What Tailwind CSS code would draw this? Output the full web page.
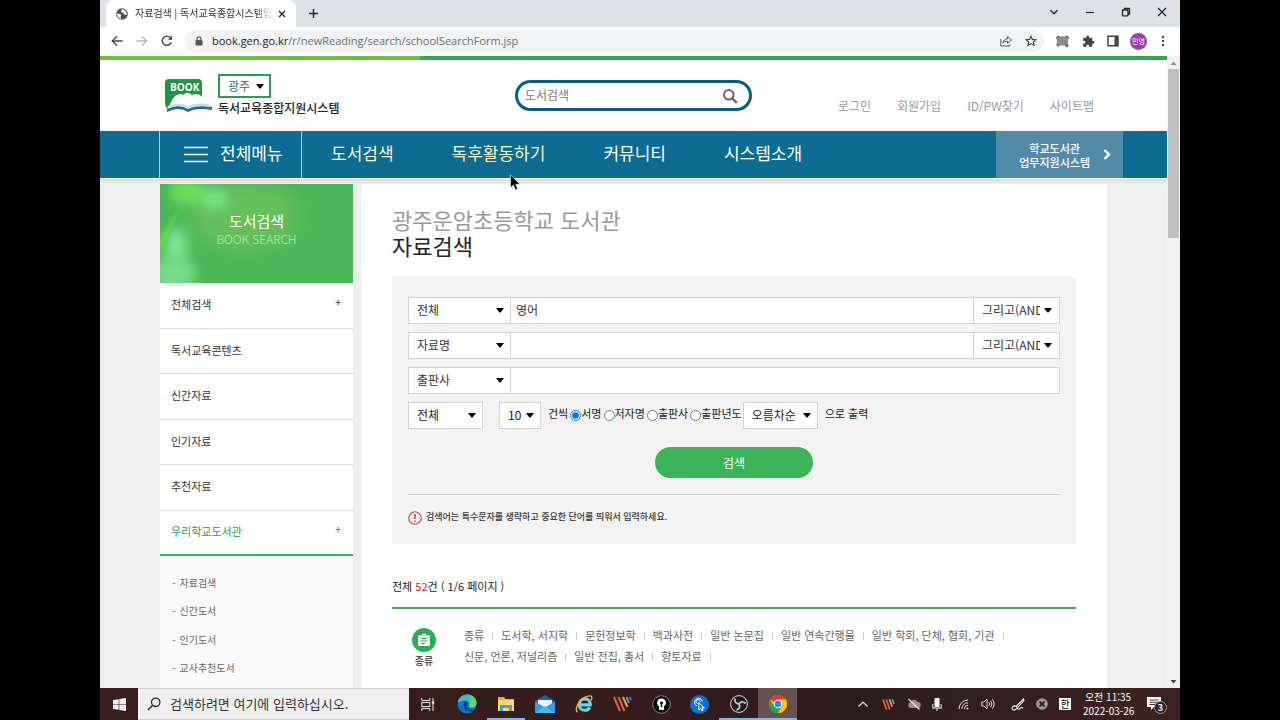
<!DOCTYPE html>
<html lang="ko">
<head>
<meta charset="utf-8">
<meta name="viewport" content="width=device-width, initial-scale=1">
<title>자료검색 | 독서교육종합지원시스템</title>
<script src="https://cdn.jsdelivr.net/npm/@tailwindcss/browser@4"></script>
</head>
<body class="bg-black font-['Noto_Sans_CJK_KR','Noto_Sans',sans-serif] text-[11px] text-[#333]">
<div class="relative mx-[100px] flex h-screen flex-col overflow-hidden bg-white">

  <!-- Tab strip -->
  <div class="flex h-[27px] shrink-0 items-stretch bg-[#dee1e6] pl-[6px]">
    <div class="flex w-[190px] items-center rounded-t-lg bg-white pr-2 pl-[10px]">
      <svg class="mr-[7px] size-3 shrink-0" viewBox="0 0 12 12"><circle cx="6" cy="6" r="5.8" fill="#4d5156"/><path d="M1.2 5.2C2.6 6 4.4 5.6 5 6.8c.5 1-.6 1.400-.4 2.400.1.700.9 1 .8 1.600C3 10.600 1 8.500 1.200 5.200zM5.500 1.200c-.6.8.4 1.500-.3 2.200-.6.6.1 1.200 1 1 .9-.2 1.400.4 1.300 1.200-.1.9.8 1.300 1.600 1.100.7-.2 1 .2 1.500.3.500-2.800-1.500-5.700-5.100-5.800z" fill="#fff"/></svg>
      <span class="flex-1 overflow-hidden whitespace-nowrap pb-px text-[10px] leading-4 [mask-image:linear-gradient(to_right,black_88%,transparent)]">자료검색 | 독서교육종합시스템입</span>
      <button aria-label="탭 닫기" class="flex size-4 shrink-0 items-center justify-center"><svg class="ml-1 size-2" viewBox="0 0 8 8"><path d="M1 1l6 6M7 1L1 7" stroke="#222" stroke-width="1.3"/></svg></button>
    </div>
    <button aria-label="새 탭" class="flex w-[34px] items-center justify-center"><svg class="size-[11px]" viewBox="0 0 11 11"><path d="M5.500 1v9M1 5.500h9" stroke="#222" stroke-width="1.400"/></svg></button>
    <div class="ml-auto flex items-center gap-[26px] pr-[13px] pb-1">
      <button aria-label="탭 검색"><svg class="size-[10px]" viewBox="0 0 10 10"><path d="M1.500 3.300L5 6.800l3.500-3.500" fill="none" stroke="#222" stroke-width="1.300"/></svg></button>
      <button aria-label="최소화"><svg class="size-[10px]" viewBox="0 0 10 10"><path d="M1 5.500h8" stroke="#222" stroke-width="1.200"/></svg></button>
      <button aria-label="이전 크기로"><svg class="size-[10px]" viewBox="0 0 10 10" fill="none" stroke="#222" stroke-width="1.300"><rect x="1.500" y="3" width="5.500" height="5.800" rx=".5"/><path d="M3.500 3V1.300h5V7H7"/></svg></button>
      <button aria-label="닫기"><svg class="size-[10px]" viewBox="0 0 10 10"><path d="M1 1l8 8M9 1L1 9" stroke="#222" stroke-width="1.200"/></svg></button>
    </div>
  </div>

  <!-- Address bar -->
  <div class="flex h-[29px] shrink-0 items-center bg-white pr-[15px] pb-px pl-[11px]">
    <div class="flex w-[74px] items-center gap-[13px]">
      <button aria-label="뒤로"><svg class="size-3" viewBox="0 0 12 12"><path d="M11.500 6H1.200M6 1.200L1.200 6 6 10.800" fill="none" stroke="#444" stroke-width="1.300"/></svg></button>
      <button aria-label="앞으로"><svg class="size-3" viewBox="0 0 12 12"><path d="M.5 6h10.300M6 1.200L10.800 6 6 10.800" fill="none" stroke="#b5b8bb" stroke-width="1.300"/></svg></button>
      <button aria-label="새로고침"><svg class="size-3" viewBox="0 0 12 12"><path d="M10.300 7.200A4.600 4.600 0 1 1 9.400 2.700" fill="none" stroke="#444" stroke-width="1.400"/><path d="M11 .6v4.200H6.800z" fill="#444"/></svg></button>
    </div>
    <div class="flex h-[22px] flex-1 items-center rounded-full bg-[#f1f3f4] pr-[7px] pl-[9px]">
      <svg class="mr-2 size-[10px] shrink-0" viewBox="0 0 10 10"><rect x="1.500" y="4" width="7" height="5.500" rx=".8" fill="#555"/><path d="M3 4.200V2.800a2 2 0 0 1 4 0v1.400" fill="none" stroke="#555" stroke-width="1.200"/></svg>
      <span class="flex-1 whitespace-nowrap font-['Open_Sans',sans-serif] text-[11px] leading-4 text-[#6b6f73]"><span class="text-[#222]">book.gen.go.kr</span>/r/newReading/search/schoolSearchForm.jsp</span>
      <button aria-label="공유" class="mr-[13px]"><svg class="size-3" viewBox="0 0 12 12" fill="none" stroke="#555" stroke-width="1"><path d="M.8 4v7h9V9.500"/><path d="M3 8c.3-2.600 1.800-4 4.500-4.200V1.600L11.500 5 7.500 8.300V6.200C5.500 6.200 4.200 6.700 3 8z"/></svg></button>
      <button aria-label="북마크"><svg class="size-3" viewBox="0 0 12 12"><path d="M6 1.200l1.400 3.200 3.500.3-2.600 2.300.8 3.400L6 8.600l-3.100 1.800.8-3.400L1.100 4.700l3.500-.3z" fill="none" stroke="#444" stroke-width="1.100"/></svg></button>
    </div>
    <div class="flex items-center pl-3">
      <button aria-label="화면 캡처"><svg class="size-[13px]" viewBox="0 0 13 13"><rect x="1" y="1.500" width="11" height="9" rx="2" fill="#8a8a8a"/><path d="M.8 4V2.500Q.8 1.300 2 1.300h1.500M9.500 1.300h1.700q1 0 1 1V4M.8 8.500v1q0 1.300 1.200 1.300h1.500M10.800 9v3.500M9 10.800h3.500" fill="none" stroke="#444"/></svg></button>
      <button aria-label="확장 프로그램" class="ml-[13px]"><svg class="size-[13px]" viewBox="0 0 24 24"><path d="M20.500 11H19V7a2 2 0 0 0-2-2h-4V3.500a2.500 2.500 0 0 0-5 0V5H4a2 2 0 0 0-2 2v3.800h1.500a2.700 2.700 0 0 1 0 5.400H2V20a2 2 0 0 0 2 2h3.800v-1.500a2.700 2.700 0 0 1 5.400 0V22H17a2 2 0 0 0 2-2v-4h1.500a2.500 2.500 0 0 0 0-5z" fill="#444"/></svg></button>
      <button aria-label="측면 패널" class="ml-3"><svg class="size-[12px]" viewBox="0 0 12 12"><rect x="1" y="1.200" width="10" height="9.600" fill="none" stroke="#444" stroke-width="1.500"/><path d="M7.500 1h3.500v10H7.500z" fill="#444"/></svg></button>
      <button class="ml-[11px] flex size-[17px] items-center justify-center rounded-full bg-[#a03bb0] text-[7px] text-white">민영</button>
      <button aria-label="메뉴" class="ml-[14px]"><svg class="h-3 w-1" viewBox="0 0 4 12" fill="#444"><circle cx="2" cy="2" r="1.200"/><circle cx="2" cy="6" r="1.200"/><circle cx="2" cy="10" r="1.200"/></svg></button>
    </div>
  </div>

  <!-- Web page and its scroll bar -->
  <div class="flex min-h-0 flex-1">
    <div class="flex min-w-0 flex-1 flex-col overflow-hidden bg-[#eee]">
      <div class="flex h-1 shrink-0 bg-[#2fa854]"><div class="w-[30%] bg-[#70c038]"></div></div>

      <header class="grid h-[71px] shrink-0 grid-cols-[1fr_237px_1fr] items-center bg-white px-[60px]">
        <div class="flex items-center gap-[6px] pl-[5px]">
          <svg class="h-[38px] w-[47px]" viewBox="0 0 47 38">
            <path d="M4 2h29q4 0 4 4v18H22L2 32q-2-3-2-6V6Q0 2 4 2z" fill="#1d9647"/>
            <path d="M4 31q3-13 11-14 2 0 3 1 3-3 6-2l3 2q4-2 8 0l2 2v8l8 4q-12-3-20 2-8-5-21 0z" fill="#fff"/>
            <path d="M2 32q12-6 21 0 8-5 24-2v3q-16-3-24 2-9-6-21 0z" fill="#1b6b92"/>
            <path d="M3 29q11-5 20 0 8-4 20-2l4 3q-15-2-24 2-9-6-21 0z" fill="#c9dfe9"/>
            <text x="5" y="14" font-family="Open Sans, sans-serif" font-size="10" font-weight="700" fill="#fff">BOOK</text>
          </svg>
          <div class="flex flex-col items-start">
            <div class="relative">
              <select aria-label="지역" class="h-6 w-[53px] appearance-none border-2 border-[#2f9a57] bg-white pb-px pl-2 text-[12px] leading-4 text-[#2b6f88]"><option>광주</option></select>
              <svg class="pointer-events-none absolute top-[10px] right-[7px] h-[5px] w-2" viewBox="0 0 8 5"><path d="M0 0h8L4.500 4.500h-1z" fill="#000"/></svg>
            </div>
            <strong class="whitespace-nowrap text-[12px] leading-[19px] font-medium text-[#222]">독서교육종합지원시스템</strong>
          </div>
        </div>
        <form class="flex h-[31px] items-center rounded-full border-3 border-[#055f7c] bg-white px-[7px]">
          <input aria-label="도서검색" placeholder="도서검색" class="min-w-0 flex-1 pb-px text-[12px] leading-4 outline-none placeholder:text-[#777]">
          <button type="button" aria-label="검색" class="mr-1"><svg class="size-4" viewBox="0 0 16 16" fill="none" stroke="#666"><circle cx="6.800" cy="6.800" r="4.800" stroke-width="2"/><path d="M10.300 10.300l4.500 4.500" stroke-width="2.400"/></svg></button>
        </form>
        <nav class="flex justify-end gap-[26px] pt-[21px] pr-[13px] text-[12px] leading-4 whitespace-nowrap text-[#999]">
          <a href="#">로그인</a><a href="#">회원가입</a><a href="#">ID/PW찾기</a><a href="#">사이트맵</a>
        </nav>
      </header>

      <nav class="relative z-10 flex h-12 shrink-0 items-stretch border-b border-white bg-[#0d6c90] pr-[44px] pl-[59px] text-[17px] whitespace-nowrap text-white shadow-[0_1px_5px_rgba(0,0,0,0.12)]">
        <button class="flex w-[143px] items-center gap-3 border-x border-[#a8d3e2] pl-6">
          <svg class="h-[17px] w-6" viewBox="0 0 24 17"><path d="M0 1.500h24M0 8.500h24M0 15.500h24" stroke="#fff" stroke-width="1.300"/></svg><span class="pb-[3px]">전체메뉴</span>
        </button>
        <div class="flex items-center gap-[58px] pb-[3px] pl-[29px]">
          <a href="#" class="text-[#f6f7c4]">도서검색</a><a href="#" class="text-[#f6f7c4]">독후활동하기</a><a href="#">커뮤니티</a><a href="#">시스템소개</a>
        </div>
        <a href="#" class="ml-auto flex w-[127px] items-center justify-end gap-[13px] bg-[#528ba7] pr-3 text-center text-[11px] leading-[14px] font-medium"><span>학교도서관<br>업무지원시스템</span>
          <svg class="h-[11px] w-2" viewBox="0 0 8 11"><path d="M1.500 1L6 5.500 1.500 10" fill="none" stroke="#fff" stroke-width="2.400"/></svg></a>
      </nav>

      <div class="flex min-h-0 flex-1 gap-2 px-[60px] pt-[5px]">
        <aside class="flex w-[193px] shrink-0 flex-col bg-[#fafafa]">
          <div class="relative flex h-[99px] shrink-0 flex-col items-center overflow-hidden bg-[#4cb75a] pt-[26px] text-white">
            <svg class="absolute inset-0 size-full" viewBox="0 0 193 99" preserveAspectRatio="none" aria-hidden="true">
              <defs>
                <filter id="soft" x="-60%" y="-60%" width="220%" height="220%"><feGaussianBlur stdDeviation="11"/></filter>
                <filter id="mid" x="-60%" y="-60%" width="220%" height="220%"><feGaussianBlur stdDeviation="6"/></filter>
                <filter id="fine" x="-60%" y="-60%" width="220%" height="220%"><feGaussianBlur stdDeviation="1.500"/></filter>
              </defs>
              <ellipse cx="85" cy="32" rx="55" ry="34" fill="#68bd5c" filter="url(#soft)"/>
              <ellipse cx="28" cy="8" rx="18" ry="12" fill="#6fdf5c" filter="url(#mid)"/>
              <ellipse cx="54" cy="15" rx="14" ry="10" fill="#76e787" filter="url(#mid)"/>
              <ellipse cx="16" cy="62" rx="11" ry="18" fill="#7fe59a" filter="url(#mid)"/>
              <ellipse cx="14" cy="90" rx="22" ry="18" fill="#78dc8a" filter="url(#mid)"/>
              <path d="M20 24L-2 58V70L8 50z" fill="#62dc45" filter="url(#fine)"/>
            </svg>
            <h2 class="relative text-[15px] leading-[22px]">도서검색</h2>
            <p class="relative text-[12px] leading-[13px] font-light text-[#bdebbf]">BOOK SEARCH</p>
          </div>
          <ul class="grid h-[273px] shrink-0 grid-rows-6 bg-white text-[#333]">
            <li class="border-b border-[#ddd]"><a href="#" class="flex h-full items-center justify-between pr-3 pb-[2px] pl-[11px]">전체검색<span class="pb-1">+</span></a></li>
            <li class="border-b border-[#ddd]"><a href="#" class="flex h-full items-center pb-[2px] pl-[11px]">독서교육콘텐츠</a></li>
            <li class="border-b border-[#ddd]"><a href="#" class="flex h-full items-center pb-[2px] pl-[11px]">신간자료</a></li>
            <li class="border-b border-[#ddd]"><a href="#" class="flex h-full items-center pb-[2px] pl-[11px]">인기자료</a></li>
            <li class="border-b border-[#ddd]"><a href="#" class="flex h-full items-center pb-[2px] pl-[11px]">추천자료</a></li>
            <li class="border-b-2 border-[#3cae63] text-[#22a052]"><a href="#" class="flex h-full items-center justify-between pr-3 pb-[2px] pl-[11px]">우리학교도서관<span class="pb-1">+</span></a></li>
          </ul>
          <ul class="mt-3 grid h-[114px] shrink-0 grid-rows-4 items-center pl-3 text-[10px] text-[#666]">
            <li class="flex gap-1"><span>-</span><a href="#">자료검색</a></li>
            <li class="flex gap-1"><span>-</span><a href="#">신간도서</a></li>
            <li class="flex gap-1"><span>-</span><a href="#">인기도서</a></li>
            <li class="flex gap-1"><span>-</span><a href="#">교사추천도서</a></li>
          </ul>
        </aside>

        <main class="flex min-w-0 flex-1 flex-col bg-white px-[31px] pt-[22px]">
          <h1 class="shrink-0 text-[22px] leading-[26px] text-[#222]"><span class="block text-[#999]">광주운암초등학교 도서관</span>자료검색</h1>

          <form class="mt-[19px] shrink-0 bg-[#f3f3f3] px-4 pt-5 pb-[19px]">
            <div class="flex flex-col gap-2 text-[12px]">
              <div class="flex h-[27px] border border-[#d2d2d2] bg-white">
                <div class="relative w-[102px] border-r border-[#d2d2d2]">
                  <select aria-label="검색 항목 1" class="size-full appearance-none pr-5 pb-[2px] pl-2"><option>전체</option></select>
                  <svg class="pointer-events-none absolute top-[10px] right-[6px] h-[5px] w-2" viewBox="0 0 8 5"><path d="M0 0h8L4.500 4.500h-1z" fill="#000"/></svg>
                </div>
                <input aria-label="검색어 1" value="영어" class="min-w-0 flex-1 px-[5px] pb-[2px] outline-none">
                <div class="relative w-[86px] border-l border-[#d2d2d2]">
                  <select aria-label="조건 1" class="size-full appearance-none pr-[19px] pb-[2px] pl-2"><option>그리고(AND)</option></select>
                  <svg class="pointer-events-none absolute top-[10px] right-[7px] h-[5px] w-2" viewBox="0 0 8 5"><path d="M0 0h8L4.500 4.500h-1z" fill="#000"/></svg>
                </div>
              </div>
              <div class="flex h-[27px] border border-[#d2d2d2] bg-white">
                <div class="relative w-[102px] border-r border-[#d2d2d2]">
                  <select aria-label="검색 항목 2" class="size-full appearance-none pr-5 pb-[2px] pl-2"><option>자료명</option></select>
                  <svg class="pointer-events-none absolute top-[10px] right-[6px] h-[5px] w-2" viewBox="0 0 8 5"><path d="M0 0h8L4.500 4.500h-1z" fill="#000"/></svg>
                </div>
                <input aria-label="검색어 2" class="min-w-0 flex-1 px-[5px] pb-[2px] outline-none">
                <div class="relative w-[86px] border-l border-[#d2d2d2]">
                  <select aria-label="조건 2" class="size-full appearance-none pr-[19px] pb-[2px] pl-2"><option>그리고(AND)</option></select>
                  <svg class="pointer-events-none absolute top-[10px] right-[7px] h-[5px] w-2" viewBox="0 0 8 5"><path d="M0 0h8L4.500 4.500h-1z" fill="#000"/></svg>
                </div>
              </div>
              <div class="flex h-[27px] border border-[#d2d2d2] bg-white">
                <div class="relative w-[102px] border-r border-[#d2d2d2]">
                  <select aria-label="검색 항목 3" class="size-full appearance-none pr-5 pb-[2px] pl-2"><option>출판사</option></select>
                  <svg class="pointer-events-none absolute top-[10px] right-[6px] h-[5px] w-2" viewBox="0 0 8 5"><path d="M0 0h8L4.500 4.500h-1z" fill="#000"/></svg>
                </div>
                <input aria-label="검색어 3" class="min-w-0 flex-1 px-[5px] pb-[2px] outline-none">
              </div>
              <div class="flex h-[27px] items-stretch text-[#222]">
                <div class="relative mr-4 w-[75px] border border-[#d2d2d2] bg-white">
                  <select aria-label="자료 구분" class="size-full appearance-none pb-[2px] pl-2"><option>전체</option></select>
                  <svg class="pointer-events-none absolute top-[10px] right-[6px] h-[5px] w-2" viewBox="0 0 8 5"><path d="M0 0h8L4.500 4.500h-1z" fill="#000"/></svg>
                </div>
                <div class="relative mr-[7px] w-[42px] border border-[#d2d2d2] bg-white">
                  <select aria-label="출력 건수" class="size-full appearance-none pb-[2px] pl-2"><option>10</option></select>
                  <svg class="pointer-events-none absolute top-[10px] right-[6px] h-[5px] w-2" viewBox="0 0 8 5"><path d="M0 0h8L4.500 4.500h-1z" fill="#000"/></svg>
                </div>
                <div class="flex items-center gap-[2px] pb-1 text-[11px] whitespace-nowrap">
                  <span>건씩</span>
                  <label class="flex items-center"><input type="radio" name="sort" checked class="mt-1 size-[11px] accent-[#0a74e0]">서명</label>
                  <label class="flex items-center"><input type="radio" name="sort" class="mt-1 size-[11px]">저자명</label>
                  <label class="flex items-center"><input type="radio" name="sort" class="mt-1 size-[11px]">출판사</label>
                  <label class="flex items-center"><input type="radio" name="sort" class="mt-1 size-[11px]">출판년도</label>
                </div>
                <div class="relative mr-[7px] ml-px w-[75px] border border-[#d2d2d2] bg-white">
                  <select aria-label="정렬 순서" class="size-full appearance-none pb-[2px] pl-2"><option>오름차순</option></select>
                  <svg class="pointer-events-none absolute top-[10px] right-[6px] h-[5px] w-2" viewBox="0 0 8 5"><path d="M0 0h8L4.500 4.500h-1z" fill="#000"/></svg>
                </div>
                <span class="flex items-center pb-1 text-[11px]">으로 출력</span>
              </div>
            </div>
            <button type="button" class="mx-auto mt-[18px] block h-[31px] w-[158px] rounded-full bg-[#3cb559] text-[12px] text-white">검색</button>
            <div class="mt-4 flex items-center gap-1 border-t border-[#ccc] pt-[14px] text-[9px] leading-4 font-medium">
              <svg class="mt-[2px] size-[14px]" viewBox="0 0 14 14"><circle cx="7" cy="7" r="6.200" fill="none" stroke="#c8403e" stroke-width="1.100"/><path d="M7 3v5M7 9.500V11" stroke="#c8403e" stroke-width="1.500"/></svg>검색어는 특수문자를 생략하고 중요한 단어를 띄워서 입력하세요.
            </div>
          </form>

          <p class="mt-8 shrink-0 text-[11px] leading-5 text-[#222]">전체 <span class="text-[#d2232a]">52</span>건 ( 1/6 페이지 )</p>
          <section class="mt-[11px] flex h-[82px] shrink-0 border-t-2 border-b border-t-[#45ab64] border-b-[#ddd] pt-4">
            <div class="flex w-16 flex-col items-center text-[10px] leading-4 font-medium">
              <svg class="mt-[3px] mb-px size-6" viewBox="0 0 24 24"><circle cx="12" cy="12" r="12" fill="#2ead56"/><path d="M7 7h2.500q.5-1.500 2.500-1.500T14.500 7H17q.8 0 .8.800v9.400q0 .8-.8.800H7q-.8 0-.8-.8V7.800Q6.200 7 7 7z" fill="#fff"/><path d="M9 10.500h6M9 13h6M9 15.500h4" stroke="#2ead56" stroke-width="1.100"/><circle cx="12" cy="7.300" r=".8" fill="#2ead56"/></svg>
              종류
            </div>
            <div class="ml-2 flex-1 text-[11px] leading-[21px] text-[#666]">
              <div class="flex items-center gap-2 whitespace-nowrap">
                <a href="#">종류</a><i class="h-2 w-px bg-[#ccc]"></i><a href="#">도서학, 서지학</a><i class="h-2 w-px bg-[#ccc]"></i><a href="#">문헌정보학</a><i class="h-2 w-px bg-[#ccc]"></i><a href="#">백과사전</a><i class="h-2 w-px bg-[#ccc]"></i><a href="#">일반 논문집</a><i class="h-2 w-px bg-[#ccc]"></i><a href="#">일반 연속간행물</a><i class="h-2 w-px bg-[#ccc]"></i><a href="#">일반 학회, 단체, 협회, 기관</a><i class="h-2 w-px bg-[#ccc]"></i>
              </div>
              <div class="flex items-center gap-2 whitespace-nowrap">
                <a href="#">신문, 언론, 저널리즘</a><i class="h-2 w-px bg-[#ccc]"></i><a href="#">일반 전집, 총서</a><i class="h-2 w-px bg-[#ccc]"></i><a href="#">향토자료</a><i class="h-2 w-px bg-[#ccc]"></i>
              </div>
            </div>
          </section>
        </main>
      </div>
    </div>

    <div class="flex w-[13px] shrink-0 flex-col items-center bg-[#f1f1f1]">
      <svg class="h-[13px] w-[7px]" viewBox="0 0 7 13"><path d="M.5 9h6l-3-3.500z" fill="#888"/></svg>
      <div class="h-[169px] w-[11px] bg-[#bfbfbf]"></div>
      <svg class="mt-auto h-[13px] w-[7px]" viewBox="0 0 7 13"><path d="M.5 5h6l-3 3.500z" fill="#444"/></svg>
    </div>
  </div>

  <!-- Taskbar -->
  <footer class="flex h-8 shrink-0 items-stretch bg-[linear-gradient(to_right,#3b1f1e,#351b1b_50%,#2c1d1d_70%,#3e2120)] text-white">
    <button aria-label="시작" class="flex w-[38px] items-center justify-center"><svg class="size-[13px]" viewBox="0 0 13 13" fill="#f2f2f2"><path d="M0 2l5.700-.8v5H0zM6.300 1.100L13 0v6.200H6.300zM0 6.800h5.700v5L0 11zM6.300 6.800H13V13l-6.700-1.100z"/></svg></button>
    <label class="flex w-[271px] items-center gap-[9px] border-y border-[#d0d0d0] bg-[#f0f0f0] pl-[9px]">
      <svg class="size-[14px]" viewBox="0 0 14 14" fill="none" stroke="#222" stroke-width="1.300"><circle cx="8.700" cy="5.300" r="4.200"/><path d="M5.700 8.300L.8 13.200"/></svg>
      <input placeholder="검색하려면 여기에 입력하십시오." class="min-w-0 flex-1 text-[13px] leading-5 outline-none placeholder:text-[#333]">
    </label>
    <div class="flex w-[388px]">
      <button aria-label="작업 보기" class="flex flex-1 items-center justify-center"><svg class="h-[13px] w-[14px]" viewBox="0 0 14 13" fill="none" stroke="#eee"><path d="M.8 0v2.500h8V0M.8 13v-2.500h8V13M12 0v13"/><rect x=".8" y="4.500" width="8" height="4"/><path d="M10.800 4.500h2.400" stroke-width="2"/></svg></button>
      <button aria-label="Edge" class="flex flex-1 items-center justify-center"><svg class="size-5" viewBox="0 0 20 20"><circle cx="10" cy="10" r="9.500" fill="#1271c4"/><path d="M.7 9C1.500 3.500 5.500.5 10 .5c5.500 0 9.500 4 9.500 8.200 0 3-2.300 4.800-5 4.800-2 0-3-.7-2.500-1.700C13 10 12 6.500 8 6.500 4.500 6.500 1.500 8 .7 9z" fill="#35c3c6"/><path d="M10 .5c5.500 0 9.500 4 9.500 8.200 0 3-2.300 4.800-5 4.800-2 0-3-.7-2.500-1.700C13.500 8 15 4 10 .5z" fill="#5fd66b"/><path d="M8 7.500c-3 3 0 9.500 5 10 2 .2 4-.5 5-2-3.500 1.500-7 .3-8-2-.8-1.800-.5-3.500.3-4.700C10 8 9 7.500 8 7.500z" fill="#0b3f82"/></svg></button>
      <button aria-label="파일 탐색기" class="flex flex-1 items-center justify-center border-b-2 border-[#76b9ed]"><svg class="mt-[2px] h-4 w-[18px]" viewBox="0 0 18 16"><path d="M1 1h6l1.500 2H17v12H1z" fill="#e9b23c"/><path d="M1 4h16v11H1z" fill="#fbd76b"/><path d="M3 15V9h12v6h-3v-3H6v3z" fill="#4a9dd8"/></svg></button>
      <button aria-label="메일" class="flex flex-1 items-center justify-center"><svg class="h-[18px] w-5" viewBox="0 0 20 18"><path d="M0 6l10-6 10 6v12H0z" fill="#1268b0"/><path d="M3 5h14v8H3z" fill="#e9f3fb"/><path d="M0 6.500l10 6 10-6V18H0z" fill="#2f9de8"/><path d="M0 18l10-7 10 7z" fill="#48b8f5"/></svg></button>
      <button aria-label="Internet Explorer" class="flex flex-1 items-center justify-center"><svg class="size-[18px]" viewBox="0 0 20 20" fill="none"><path d="M5.500 11h11.500c.3-4.200-2.500-6.700-6-6.700S4.800 7 4.800 10.700s2.500 6.300 6 6.300c2.700 0 4.600-1.200 5.500-3.300" stroke="#6fd3f6" stroke-width="3.400"/><path d="M3 19C-.5 17 2.500 9 8 4.500 12.500 1 17.500 0 18.500 2c.6 1.200 0 2.800-.8 4" stroke="#edb93d" stroke-width="1.500"/></svg></button>
      <button aria-label="강의 도구" class="flex flex-1 items-center justify-center"><svg class="h-4 w-[19px]" viewBox="0 0 19 16" fill="none" stroke-width="2"><path d="M1 1l6 14M5.500 1l6 14" stroke="#e2653c"/><path d="M10 1l4.500 10" stroke="#e4a35b"/><path d="M13.500 1l2.500 6" stroke="#5a9cab"/><path d="M16.500 1l1.500 3" stroke="#3d78b0"/></svg></button>
      <button aria-label="보안 도구" class="flex flex-1 items-center justify-center"><svg class="size-[19px]" viewBox="0 0 19 19"><circle cx="9.500" cy="9.500" r="8.800" fill="#050808" stroke="#78898c"/><path d="M9.500 3.500a4.300 4.300 0 0 0-2.300 8l-.4 3.500h5.400l-.4-3.500a4.300 4.300 0 0 0-2.300-8z" fill="#fff"/><path d="M9.500 6.500a1.500 1.500 0 0 0-.7 2.800V12h1.400V9.300a1.500 1.500 0 0 0-.7-2.800z" fill="#000"/></svg></button>
      <button aria-label="포인터 도구" class="flex flex-1 items-center justify-center"><svg class="size-[19px]" viewBox="0 0 19 19" fill="none" stroke="#fff"><circle cx="9.500" cy="9.500" r="9.500" fill="#0c6fd4" stroke="none"/><path d="M7 11a4 4 0 1 1 5.500-4.500"/><path d="M7.500 8.500a2 2 0 1 1 2.500-2"/><path d="M8.800 7.500v7.500l1.800-1.700 1.200 2.500 1.300-.7-1.200-2.300h2.400z"/></svg></button>
      <button aria-label="OBS" class="flex flex-1 items-center justify-center border-b-2 border-[#76b9ed]"><svg class="mt-[2px] size-[18px]" viewBox="0 0 18 18"><circle cx="9" cy="9" r="8.400" fill="#1b1b1d" stroke="#ddd"/><path d="M9 9C6 9 4.500 7 5 3.500M9 9c1.500-2.600 4-3 6.500-.5M9 9c1.500 2.600.5 5-2.500 6" fill="none" stroke="#c9c9c9" stroke-width="1.800"/></svg></button>
      <button aria-label="Chrome" class="flex flex-1 items-center justify-center border-b-2 border-[#76b9ed] bg-[#68504f]"><svg class="mt-[2px] size-[18px]" viewBox="0 0 18 18"><circle cx="9" cy="9" r="9" fill="#fbc116"/><path d="M9 9L1.200 4.500A9 9 0 0 1 16.800 4.500H9z" fill="#e33b2e"/><path d="M1.200 4.500A9 9 0 0 0 9 18l3.900-6.800L9 9 5.100 11.200z" fill="#2ba24c"/><path d="M16.800 4.500H9V9l3.900 2.200L9 18A9 9 0 0 0 16.800 4.500z" fill="#fbc116"/><circle cx="9" cy="9" r="4.200" fill="#fff"/><circle cx="9" cy="9" r="3.300" fill="#3c7de6"/></svg></button>
    </div>
    <div class="ml-auto flex items-center">
      <div class="flex items-center gap-[11px] pr-3">
        <svg class="h-[6px] w-[10px]" viewBox="0 0 10 6"><path d="M.5 5.500L5 1l4.500 4.500" fill="none" stroke="#eee" stroke-width="1.100"/></svg>
        <svg class="ml-[3px] h-[13px] w-[13px]" viewBox="0 0 14 13" fill="none" stroke-width="1.800"><path d="M1 1l4 11M4.500 1l4 11" stroke="#e2653c"/><path d="M8 1l3 8" stroke="#e4a35b"/><path d="M11 1l2 5" stroke="#5a9cc0"/></svg>
        <svg class="ml-px h-3 w-[14px]" viewBox="0 0 14 12"><path d="M3.500 10a3 3 0 0 1-.2-5.800A4 4 0 0 1 10.500 4 3 3 0 0 1 11 10z" fill="#9c8e8e"/><path d="M1.500 1l11 10.500" stroke="#e8e8e8" stroke-width="1.200"/></svg>
        <svg class="h-[13px] w-[10px]" viewBox="0 0 10 13"><rect x="2.500" y="0" width="5" height="9" rx="1" fill="#fff"/><path d="M.8 6v4h8.400V6M5 10v3" fill="none" stroke="#c9c0c0" stroke-width="1.300"/></svg>
        <svg class="ml-[5px] h-[11px] w-[12px]" viewBox="0 0 12 11" fill="none" stroke="#e5e5e5"><path d="M1 10A9 9 0 0 1 10 1M3.800 10A6.200 6.200 0 0 1 10 3.800M6.300 10A3.700 3.700 0 0 1 10 6.300"/><circle cx="9.500" cy="9.500" r="1" fill="#fff" stroke="none"/></svg>
        <svg class="h-3 w-[14px]" viewBox="0 0 14 12" fill="none" stroke="#e5e5e5"><path d="M.8 4h2.200l3-3v10L3 8H.8zM8 4.200q1.200 1.800 0 3.600M9.800 2.800q2.200 3.200 0 6.400M11.500 1.300q3.200 4.700 0 9.400"/></svg>
        <svg class="ml-[5px] h-[13px] w-[14px]" viewBox="0 0 14 13" fill="none" stroke="#eee" stroke-width="1.100"><path d="M12.500 1L5 8.500l1.500 1.200L13 2.500zM5 8.500C3 7 .5 9 1.200 11c.8 1.800 4 .8 5-1 .8 1.800 2.500 1.300 3 .3s2-.8 3-.3"/></svg>
        <svg class="size-3" viewBox="0 0 12 12"><circle cx="6" cy="6" r="5.800" fill="#a39a9a"/><path d="M3.500 3.500l5 5M8.500 3.500l-5 5" stroke="#342020" stroke-width="1.800"/></svg>
        <span class="flex size-3 items-center justify-center bg-white text-[10px] leading-3 text-black">한</span>
      </div>
      <div class="w-[50px] text-center text-[10px] leading-[14px] whitespace-nowrap">오전 11:35<br>2022-03-26</div>
      <button aria-label="알림 3개" class="relative mr-[13px] ml-[14px] h-5 w-5">
        <svg class="h-4 w-[14px]" viewBox="0 0 14 16"><path d="M0 1h14v10H7l-3 3v-3H0z" fill="#fff"/><path d="M2.500 4h9M2.500 6.300h9M2.500 8.500h6" stroke="#4a3030"/></svg>
        <span class="absolute right-0 bottom-0 flex size-[13px] items-center justify-center rounded-full border border-[#999] bg-[#2b2323] text-[9px] leading-3 font-bold">3</span>
      </button>
    </div>
  </footer>

  <!-- Mouse pointer -->
  <svg class="pointer-events-none absolute top-[174px] left-[410px] z-20 h-[17px] w-[11px]" viewBox="0 0 11 17"><path d="M.5.8v13l3-2.800 2 5 2.200-1-2-4.700H10z" fill="#000" stroke="#fff" stroke-width=".6"/></svg>
</div>
</body>
</html>
